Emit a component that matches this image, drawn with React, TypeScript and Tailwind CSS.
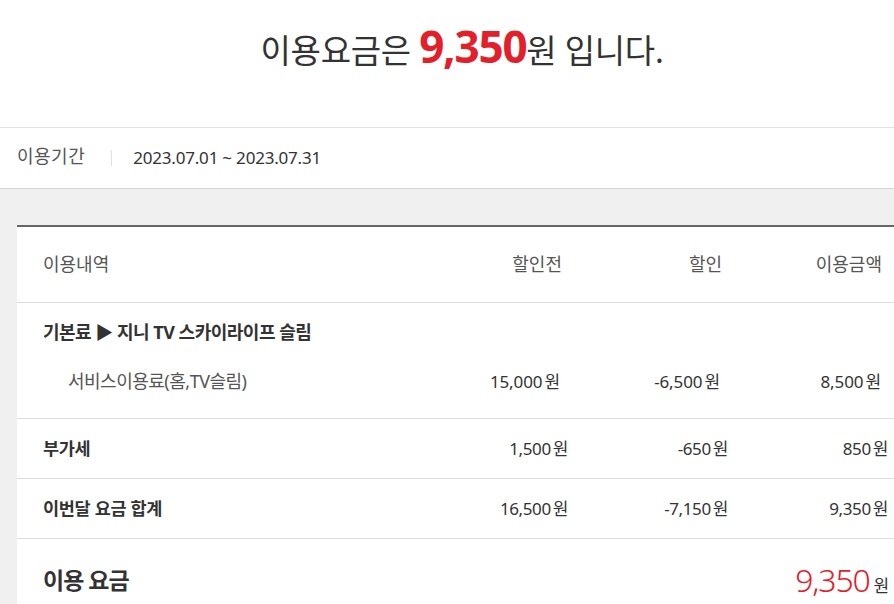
const font = "font-['Noto_Sans','Noto_Sans_CJK_KR',sans-serif]"

type Row = { label: string; before: string; discount: string; amount: string }

const rows: Row[] = [
  { label: '부가세', before: '1,500', discount: '-650', amount: '850' },
  { label: '이번달 요금 합계', before: '16,500', discount: '-7,150', amount: '9,350' },
]

function Won({ value, className = '' }: { value: string; className?: string }) {
  return (
    <span className={`text-[17px] text-[#333] ${className}`}>
      {value}
      <span className="ml-[2px] text-[17px]">원</span>
    </span>
  )
}

export default function App() {
  return (
    <div className={`${font} min-h-[604px] w-[894px] overflow-hidden bg-[#f0f0f0]`}>
      <header className="flex h-[128px] items-start justify-center border-b border-[#e2e2e2] bg-white pl-[30px] pt-[20px]">
        <h1 className="text-[33px] font-normal leading-[52px] tracking-[-0.3px] text-[#333]">
          이용요금은 <span className="text-[44px] font-bold tracking-[-1.2px] text-[#e3202a]">9,350</span>원 입니다.
        </h1>
      </header>

      <div className="flex h-[61px] items-center border-b border-[#d6d6d6] bg-white pl-[17px]">
        <span className="pb-[3px] text-[18px] tracking-[0.5px] text-[#555]">이용기간</span>
        <span className="ml-[26px] mr-[21px] h-[16px] w-px bg-[#e0e0e0]" />
        <span className="text-[17px] tracking-[-0.2px] text-[#333]">2023.07.01 ~ 2023.07.31</span>
      </div>

      <div className="pl-[17px] pt-[36px]">
        <div className="border-t-2 border-[#666] bg-white">
          <div className="grid h-[76px] grid-cols-[1fr_160px_160px_160px] items-center border-b border-[#dedede] pl-[26px] pr-[12px] text-[18px] text-[#555]">
            <span>이용내역</span>
            <span className="text-right">할인전</span>
            <span className="text-right">할인</span>
            <span className="text-right">이용금액</span>
          </div>

          <div className="flex h-[116px] flex-col border-b border-[#dedede] pl-[26px] pr-[12px] pt-[16px]">
            <span className="text-[18px] font-bold tracking-[-0.5px] text-[#333]">
              기본료 ▶ 지니 TV 스카이라이프 슬림
            </span>
            <div className="mt-[22px] grid grid-cols-[1fr_160px_160px_160px] items-center">
              <span className="pl-[25px] text-[18px] tracking-[-0.5px] text-[#555]">서비스이용료(홈,TV슬림)</span>
              <Won value="15,000" className="pr-[2px] text-right tracking-[-0.1px]" />
              <Won value="-6,500" className="pr-[2px] text-right tracking-[-0.1px]" />
              <Won value="8,500" className="pr-[1px] text-right tracking-[-0.1px]" />
            </div>
          </div>

          {rows.map((row) => (
            <div
              key={row.label}
              className="grid h-[60px] grid-cols-[1fr_160px_160px_160px] items-center border-b border-[#dedede] pl-[26px] pr-[6px]"
            >
              <span className="text-[17.5px] font-bold tracking-[-0.3px] text-[#333]">{row.label}</span>
              <Won value={row.before} className="text-right tracking-[-0.4px]" />
              <Won value={row.discount} className="text-right tracking-[-0.4px]" />
              <Won value={row.amount} className="text-right tracking-[-0.4px]" />
            </div>
          ))}

          <div className="flex h-[70px] items-center justify-between pl-[26px] pr-[6px] pt-[12px]">
            <span className="text-[23px] font-bold tracking-[-1px] text-[#333]">이용 요금</span>
            <span className="text-[32px] font-light tracking-[-1.2px] text-[#e3202a]">
              9,350<span className="ml-[4px] text-[17px] font-normal text-[#333]">원</span>
            </span>
          </div>
        </div>
      </div>
    </div>
  )
}
